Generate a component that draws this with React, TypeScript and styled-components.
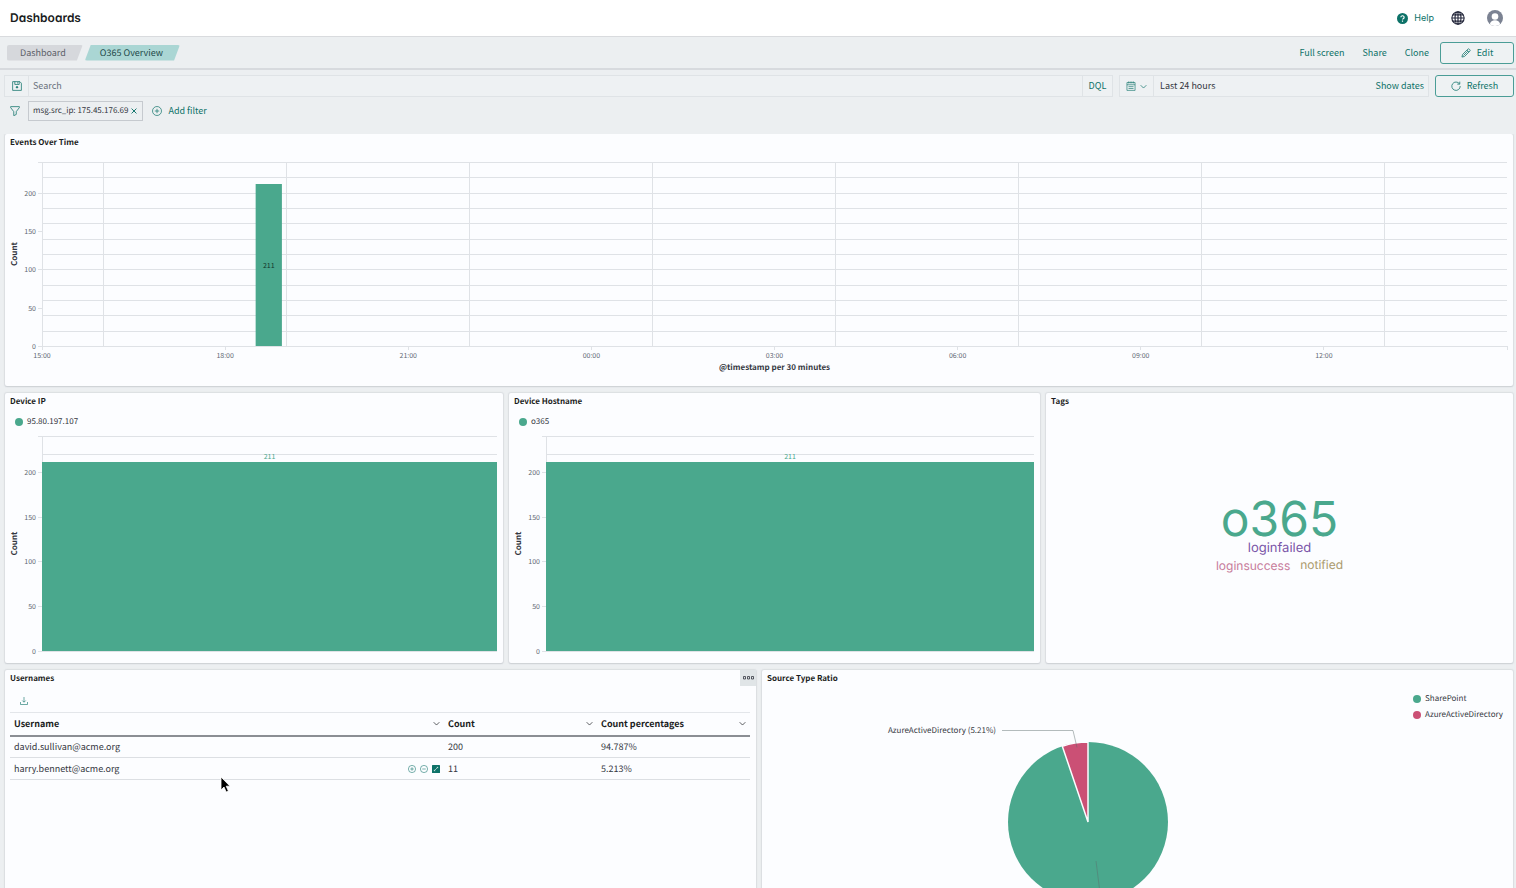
import React from "react";
import styled, { createGlobalStyle } from "styled-components";

const GREEN = "#0d7268";
const BAR = "#4aa88d";
const TEXT = "#343741";
const UI = `"Noto Sans CJK SC", "Open Sans", sans-serif`;

const Global = createGlobalStyle`
  * { box-sizing: border-box; }
  body { margin: 0; background: #eceff1; font-family: ${UI}; font-size: 9px; line-height: 16px; color: ${TEXT}; text-rendering: geometricPrecision; }
  button, input { font: inherit; color: inherit; }
  button { cursor: pointer; padding: 0; border: 0; background: none; }
  svg { display: block; }
`;

const Page = styled.div`
  height: 100vh;
  overflow: hidden;
  display: flex;
  flex-direction: column;
`;

const Header = styled.header`
  flex: none;
  display: flex;
  align-items: center;
  height: 37px;
  padding: 0 13px 0 10px;
  background: #fff;
  border-bottom: 1px solid #d9dbde;
`;

const AppTitle = styled.h1`
  margin: 0;
  flex: 1;
  font: 600 12px/18px Inter, sans-serif;
  font-feature-settings: "cv11";
  color: #1a1c21;
`;

const HelpButton = styled.button`
  display: flex;
  align-items: center;
  gap: 6px;
  color: ${GREEN};
  font-family: Inter, sans-serif;
  margin-right: 17px;
`;

const IconButton = styled.button<{ $gap?: number; $color?: string }>`
  display: flex;
  align-items: center;
  justify-content: center;
  color: ${(p) => p.$color ?? GREEN};
  margin-right: ${(p) => p.$gap ?? 0}px;
`;

const NavBar = styled.nav`
  flex: none;
  display: flex;
  align-items: center;
  height: 33px;
  padding: 0 2px 0 7px;
  border-bottom: 2px solid #d7dade;
`;

const Crumbs = styled.div`
  display: flex;
  flex: 1;
  gap: 2px;
`;

const Crumb = styled.a<{ $current?: boolean }>`
  padding: 0 17px 0 ${(p) => (p.$current ? 15 : 13)}px;
  line-height: 16px;
  text-decoration: none;
  color: ${(p) => (p.$current ? "#1f4a4a" : "#5c6069")};
  background: ${(p) => (p.$current ? "#aad6d4" : "#d6d8dc")};
  border-radius: 2px;
  clip-path: ${(p) =>
    p.$current
      ? "polygon(6px 0, 100% 0, calc(100% - 6px) 100%, 0 100%)"
      : "polygon(0 0, 100% 0, calc(100% - 6px) 100%, 0 100%)"};
`;

const NavActions = styled.div`
  display: flex;
  align-items: center;
  gap: 18px;
  margin-right: 11px;
`;

const TextButton = styled.button`
  color: ${GREEN};
  white-space: nowrap;
`;

const OutlineButton = styled.button<{ $width: number }>`
  display: flex;
  align-items: center;
  justify-content: center;
  gap: 6px;
  width: ${(p) => p.$width}px;
  height: 22px;
  border: 1px solid #4a9d96;
  border-radius: 3px;
  color: ${GREEN};
  background: #eef2f3;
`;

const QueryRow = styled.form`
  flex: none;
  display: flex;
  gap: 6px;
  margin: 5px 2px 0 4px;
`;

const Field = styled.div<{ $width?: number }>`
  display: flex;
  align-items: stretch;
  flex: ${(p) => (p.$width ? `0 0 ${p.$width}px` : "1")};
  height: 22px;
  border: 1px solid #dfe3e6;
  background: #eef1f3;
`;

const FieldAddon = styled.button<{ $width: number; $side: "left" | "right" }>`
  display: flex;
  align-items: center;
  justify-content: center;
  gap: 4px;
  width: ${(p) => p.$width}px;
  color: ${GREEN};
  border-${(p) => (p.$side === "left" ? "right" : "left")}: 1px solid #dfe3e6;
`;

const SearchInput = styled.input`
  flex: 1;
  min-width: 0;
  border: 0;
  outline: 0;
  padding: 0 4px 1px;
  background: transparent;
  &::placeholder { color: #6a717d; opacity: 1; }
`;

const RangeButton = styled.button`
  flex: 1;
  padding: 0 0 1px 6px;
  text-align: left;
`;

const DatesButton = styled(TextButton)`
  margin-right: 4px;
`;

const FilterRow = styled.div`
  flex: none;
  display: flex;
  align-items: center;
  height: 20px;
  margin: 4px 10px 13px;
`;

const FilterPill = styled.span`
  display: flex;
  align-items: center;
  gap: 3px;
  height: 20px;
  padding: 0 5px 0 4px;
  margin: 0 9px 0 8px;
  border: 1px solid #c6cacf;
  font-size: 8px;
`;

const AddFilter = styled(TextButton)`
  display: flex;
  align-items: center;
  gap: 6px;
`;

const Main = styled.main`
  flex: 1;
  min-height: 0;
  overflow-y: auto;
  scrollbar-width: none;
  padding: 0 3px 6px 5px;
  display: flex;
  flex-direction: column;
  gap: 7px;
`;

const PanelRow = styled.div`
  flex: none;
  display: flex;
  gap: 6px;
`;

const Panel = styled.section<{ $grow: number; $height: number }>`
  flex: ${(p) => p.$grow} 1 0;
  min-width: 0;
  height: ${(p) => p.$height}px;
  position: relative;
  display: flex;
  flex-direction: column;
  background: #fcfdff;
  border-radius: 2px;
  box-shadow: 0 0 1px 1px #d3d7dbaa, 0 1px 1px #c8ccd0;
`;

const PanelTitle = styled.h2`
  margin: 0;
  padding: 0 5px;
  font-size: 8px;
  line-height: 18px;
  color: #1a1c21;
`;

const Legend = styled.ul<{ $vertical?: boolean }>`
  list-style: none;
  margin: 0;
  padding: ${(p) => (p.$vertical ? "3px 10px 0 0" : "3px 10px 6px")};
  display: flex;
  flex-direction: column;
  align-self: ${(p) => (p.$vertical ? "flex-end" : "flex-start")};
  font-size: 8px;
`;

const LegendItem = styled.li<{ $color: string }>`
  display: flex;
  align-items: center;
  gap: 4px;
  &::before {
    content: "";
    width: 8px;
    height: 8px;
    border-radius: 50%;
    background: ${(p) => p.$color};
  }
`;

const Plot = styled.div<{ $top: number; $height: number }>`
  height: ${(p) => p.$height}px;
  margin: ${(p) => p.$top}px 6px 0 37px;
  svg { overflow: visible; }
`;

const Tick = styled.text`
  font-size: 7px;
  fill: #646a75;
`;

const AxisTitle = styled.text`
  font-size: 8px;
  font-weight: 700;
  fill: ${TEXT};
  text-anchor: middle;
`;

type ChartProps = {
  top: number;
  height: number;
  bar: { from: number; to: number; value: number };
  labelInside?: boolean;
  hours?: string[];
  xTitle?: string;
};

const MAX = 240;

function BarChart({ top, height, bar, labelInside, hours, xTitle }: ChartProps) {
  const y = (v: number) => Math.round(height - (v / MAX) * height);
  const pct = (hour: number) => `${(hour / 24) * 100}%`;
  const steps = Array.from({ length: 13 }, (_, i) => i * 20);
  const mid = `${(bar.from + bar.to) * 50}%`;
  return (
    <Plot $top={top} $height={height}>
      <svg width="100%" height={height} role="img" aria-label="Count">
        <g stroke="#dfe2e6" shapeRendering="crispEdges">
          {steps.map((v) => (
            <line key={v} x1="0" x2="100%" y1={y(v)} y2={y(v)} />
          ))}
          {[0, 50, 100, 150, 200, 240].map((v) => (
            <line key={v} x1="-4" x2="0" y1={y(v)} y2={y(v)} />
          ))}
          <line x1="0" x2="0" y1="0" y2={height} />
          {hours &&
            [1, 4, 7, 10, 13, 16, 19, 22].map((h) => (
              <line key={h} x1={pct(h)} x2={pct(h)} y1="0" y2={height} />
            ))}
          {hours &&
            [0, 3, 6, 9, 12, 15, 18, 21, 24].map((h) => (
              <line key={h} x1={pct(h)} x2={pct(h)} y1={height} y2={height + 4} />
            ))}
        </g>
        <rect
          x={`${bar.from * 100}%`}
          width={`${(bar.to - bar.from) * 100}%`}
          y={y(bar.value)}
          height={height - y(bar.value)}
          fill={BAR}
        />
        <Tick
          x={mid}
          y={labelInside ? height / 2 + 14 : y(bar.value) - 3}
          textAnchor="middle"
          style={{ fill: labelInside ? "#12352b" : BAR }}
        >
          {bar.value}
        </Tick>
        {[0, 50, 100, 150, 200].map((v) => (
          <Tick key={v} x="-6" y={y(v) + 3} textAnchor="end">
            {v}
          </Tick>
        ))}
        {hours?.map((label, i) => (
          <Tick key={label} x={pct(i * 3)} y={height + 12} textAnchor="middle">
            {label}
          </Tick>
        ))}
        <AxisTitle transform={`translate(-25 ${height / 2}) rotate(-90)`}>Count</AxisTitle>
        {xTitle && (
          <AxisTitle x="50%" y={height + 24}>
            {xTitle}
          </AxisTitle>
        )}
      </svg>
    </Plot>
  );
}

const Cloud = styled.div`
  flex: 1;
  display: flex;
  flex-direction: column;
  align-items: center;
  padding-top: 87px;
  font-family: Inter, sans-serif;
`;

const Tag = styled.span<{ $size: number; $line: number; $color: string }>`
  font-size: ${(p) => p.$size}px;
  line-height: ${(p) => p.$line}px;
  color: ${(p) => p.$color};
`;

const TagLine = styled.div`
  display: flex;
  gap: 10px;
`;

const MenuButton = styled.button`
  position: absolute;
  top: 0;
  right: 0;
  width: 16px;
  height: 16px;
  display: flex;
  align-items: center;
  justify-content: center;
  background: #e0e5e7;
  color: ${TEXT};
`;

const Download = styled(IconButton)`
  align-self: flex-start;
  margin: 9px 0 7px 15px;
`;

const Table = styled.table`
  margin: 0 5px;
  width: calc(100% - 11px);
  border-collapse: collapse;
  table-layout: fixed;
  border-top: 1px solid #e3e6ea;
`;

const HeadCell = styled.th<{ $width?: string }>`
  width: ${(p) => p.$width ?? "auto"};
  height: 23px;
  padding: 0 4px;
  text-align: left;
  color: #1a1c21;
  border-bottom: 2px solid #8b8e94;
`;

const Cell = styled.td`
  height: 22px;
  padding: 0 4px;
  border-bottom: 1px solid #dcdfe3;
`;

const CellLine = styled.div`
  display: flex;
  align-items: center;
  justify-content: space-between;
`;

const CellActions = styled.div`
  display: flex;
  gap: 4px;
`;

const PieArea = styled.div`
  display: flex;
  justify-content: center;
  position: absolute;
  top: 49px;
  left: 0;
  width: 652px;
  svg { overflow: visible; }
`;

const PieLabel = styled.text`
  font-size: 8px;
  fill: ${TEXT};
`;

const Pointer = styled.svg`
  position: absolute;
  left: 215px;
  top: 106px;
`;

type IconProps = { size?: number };

const svgProps = (size: number) => ({
  width: size,
  height: size,
  viewBox: "0 0 16 16",
  fill: "none",
  stroke: "currentColor",
  "aria-hidden": true,
});

const HelpIcon = ({ size = 11 }: IconProps) => (
  <svg {...svgProps(size)}>
    <circle cx="8" cy="8" r="8" fill="currentColor" stroke="none" />
    <path d="M5.6 6.2a2.4 2.2 0 1 1 3.4 2c-.7.4-1 .7-1 1.400M8 11v1.600" stroke="#fff" strokeWidth="1.700" />
  </svg>
);

const GlobeIcon = ({ size = 14 }: IconProps) => (
  <svg {...svgProps(size)} strokeWidth="1.300">
    <circle cx="8" cy="8" r="7" />
    <ellipse cx="8" cy="8" rx="3.400" ry="7" />
    <path d="M8 1v14M1 8h14M2 4.500h12M2 11.500h12" />
  </svg>
);

const UserIcon = ({ size = 16 }: IconProps) => (
  <svg {...svgProps(size)} stroke="none">
    <circle cx="8" cy="8" r="8" fill="currentColor" />
    <circle cx="8" cy="6.500" r="3.300" fill="#fff" />
    <path d="M2.800 14.200c.6-2.700 2.500-4 5.200-4s4.600 1.300 5.200 4A8 8 0 0 1 8 16a8 8 0 0 1-5.200-1.800z" fill="#fff" />
  </svg>
);

const PencilIcon = ({ size = 10 }: IconProps) => (
  <svg {...svgProps(size)} strokeWidth="1.200">
    <path d="M1.500 14.500l1-4.200L11 1.800a1.500 1.500 0 0 1 2.100 0l1.100 1.100a1.500 1.500 0 0 1 0 2.100L5.700 13.500zM9.500 3.300l3.200 3.200M4 12l7-7" />
  </svg>
);

const SaveIcon = ({ size = 10 }: IconProps) => (
  <svg {...svgProps(size)} strokeWidth="1.200">
    <path d="M1 1h11.500L15 3.500V15H1zM4.500 1v4.500h7V1M9 2v2" />
    <circle cx="8" cy="10" r="1.300" fill="currentColor" />
  </svg>
);

const FilterIcon = ({ size = 10 }: IconProps) => (
  <svg {...svgProps(size)} strokeWidth="1.200">
    <path d="M1 1h14v1.500L10 9v4.500L6 15.500V9L1 2.500z" />
  </svg>
);

const CalendarIcon = ({ size = 10 }: IconProps) => (
  <svg {...svgProps(size)} strokeWidth="1">
    <path d="M1.500 2.500h13v12.500h-13zM1.500 6h13M4.500 0.500v3.500M8 0.500v3.500M11.500 0.500v3.500M4 9h8M4 12h8" />
  </svg>
);

const ChevronIcon = ({ size = 7 }: IconProps) => (
  <svg {...svgProps(size)} strokeWidth="1.600">
    <path d="M1.500 5L8 11.500 14.500 5" />
  </svg>
);

const RefreshIcon = ({ size = 10 }: IconProps) => (
  <svg {...svgProps(size)} strokeWidth="1.200">
    <path d="M13.500 4.500A6.700 6.700 0 1 0 14.700 8M14 1v4h-4" />
  </svg>
);

const CrossIcon = ({ size = 6 }: IconProps) => (
  <svg {...svgProps(size)} strokeWidth="2.500">
    <path d="M1.500 1.500l13 13M14.500 1.500l-13 13" />
  </svg>
);

const PlusCircleIcon = ({ size = 10 }: IconProps) => (
  <svg {...svgProps(size)} strokeWidth="1.100">
    <circle cx="8" cy="8" r="7.200" />
    <path d="M8 4.500v7M4.500 8h7" />
  </svg>
);

const MinusCircleIcon = ({ size = 10 }: IconProps) => (
  <svg {...svgProps(size)} strokeWidth="1.100">
    <circle cx="8" cy="8" r="7.200" />
    <path d="M4.500 8h7" />
  </svg>
);

const ExpandIcon = ({ size = 8 }: IconProps) => (
  <svg {...svgProps(size)}>
    <rect width="16" height="16" rx="1" fill="currentColor" stroke="none" />
    <path d="M4.500 11.500l7-7M9.500 4.500h2v2M4.500 9.500v2h2" stroke="#fff" strokeWidth="1.200" />
  </svg>
);

const DownloadIcon = ({ size = 8 }: IconProps) => (
  <svg {...svgProps(size)} strokeWidth="1.200">
    <path d="M8 0v10M4.500 7L8 10.500 11.500 7M1 10v5h14v-5" />
  </svg>
);

const BoxesIcon = () => (
  <svg width="11" height="4" viewBox="0 0 11 4" fill="none" stroke="currentColor" strokeOpacity=".8" aria-hidden>
    <path d="M.5.5h2v2.500h-2zM4.500.5h2v2.500h-2zM8.500.5h2v2.500h-2z" />
  </svg>
);

const HOURS = ["15:00", "18:00", "21:00", "00:00", "03:00", "06:00", "09:00", "12:00"];

const USERS = [
  { name: "david.sullivan@acme.org", count: 200, share: "94.787%" },
  { name: "harry.bennett@acme.org", count: 11, share: "5.213%", active: true },
];

export default function App() {
  return (
    <>
      <Global />
      <Page>
        <Header>
          <AppTitle>Dashboards</AppTitle>
          <HelpButton type="button">
            <HelpIcon />
            Help
          </HelpButton>
          <IconButton type="button" aria-label="Language" $gap={22} $color="#23263a">
            <GlobeIcon />
          </IconButton>
          <IconButton type="button" aria-label="Account" $color="#7b8292">
            <UserIcon />
          </IconButton>
        </Header>

        <NavBar>
          <Crumbs>
            <Crumb href="#dashboard">Dashboard</Crumb>
            <Crumb href="#o365" $current>
              O365 Overview
            </Crumb>
          </Crumbs>
          <NavActions>
            <TextButton type="button">Full screen</TextButton>
            <TextButton type="button">Share</TextButton>
            <TextButton type="button">Clone</TextButton>
          </NavActions>
          <OutlineButton type="button" $width={74}>
            <PencilIcon />
            Edit
          </OutlineButton>
        </NavBar>

        <QueryRow onSubmit={(e) => e.preventDefault()}>
          <Field>
            <FieldAddon type="button" $width={24} $side="left" aria-label="Saved queries">
              <SaveIcon />
            </FieldAddon>
            <SearchInput aria-label="Search" placeholder="Search" />
            <FieldAddon type="button" $width={30} $side="right">
              DQL
            </FieldAddon>
          </Field>
          <Field $width={310}>
            <FieldAddon type="button" $width={34} $side="left" aria-label="Quick ranges">
              <CalendarIcon />
              <ChevronIcon />
            </FieldAddon>
            <RangeButton type="button">Last 24 hours</RangeButton>
            <DatesButton type="button">Show dates</DatesButton>
          </Field>
          <OutlineButton type="submit" $width={79}>
            <RefreshIcon />
            Refresh
          </OutlineButton>
        </QueryRow>

        <FilterRow>
          <IconButton type="button" aria-label="Filters">
            <FilterIcon />
          </IconButton>
          <FilterPill>
            msg.src_ip: 175.45.176.69
            <IconButton type="button" aria-label="Remove filter">
              <CrossIcon />
            </IconButton>
          </FilterPill>
          <AddFilter type="button">
            <PlusCircleIcon />
            Add filter
          </AddFilter>
        </FilterRow>

        <Main>
          <PanelRow>
            <Panel $grow={1} $height={252}>
              <PanelTitle>Events Over Time</PanelTitle>
              <BarChart
                top={10}
                height={184}
                bar={{ from: 3.5 / 24, to: 3.93 / 24, value: 211 }}
                labelInside
                hours={HOURS}
                xTitle="@timestamp per 30 minutes"
              />
            </Panel>
          </PanelRow>

          <PanelRow>
            <Panel $grow={498} $height={270}>
              <PanelTitle>Device IP</PanelTitle>
              <Legend>
                <LegendItem $color={BAR}>95.80.197.107</LegendItem>
              </Legend>
              <BarChart top={0} height={215} bar={{ from: 0, to: 1, value: 211 }} />
            </Panel>
            <Panel $grow={531} $height={270}>
              <PanelTitle>Device Hostname</PanelTitle>
              <Legend>
                <LegendItem $color={BAR}>o365</LegendItem>
              </Legend>
              <BarChart top={0} height={215} bar={{ from: 0, to: 1, value: 211 }} />
            </Panel>
            <Panel $grow={467} $height={270}>
              <PanelTitle>Tags</PanelTitle>
              <Cloud>
                <Tag $size={48} $line={42} $color={BAR}>
                  o365
                </Tag>
                <Tag $size={13} $line={17} $color="#7a55a8">
                  loginfailed
                </Tag>
                <TagLine>
                  <Tag $size={12} $line={18} $color="#c77b9a">
                    loginsuccess
                  </Tag>
                  <Tag $size={12} $line={16} $color="#ab9a6c">
                    notified
                  </Tag>
                </TagLine>
              </Cloud>
            </Panel>
          </PanelRow>

          <PanelRow>
            <Panel $grow={751} $height={270}>
              <PanelTitle>Usernames</PanelTitle>
              <MenuButton type="button" aria-label="Panel options">
                <BoxesIcon />
              </MenuButton>
              <Download type="button" aria-label="Export">
                <DownloadIcon />
              </Download>
              <Table>
                <thead>
                  <tr>
                    {["Username", "Count", "Count percentages"].map((label, i) => (
                      <HeadCell key={label} scope="col" $width={i ? "153px" : undefined}>
                        <CellLine>
                          {label}
                          <ChevronIcon />
                        </CellLine>
                      </HeadCell>
                    ))}
                  </tr>
                </thead>
                <tbody>
                  {USERS.map((u) => (
                    <tr key={u.name}>
                      <Cell>
                        <CellLine>
                          {u.name}
                          {u.active && (
                            <CellActions>
                              <IconButton type="button" aria-label="Filter for value">
                                <PlusCircleIcon size={8} />
                              </IconButton>
                              <IconButton type="button" aria-label="Filter out value">
                                <MinusCircleIcon size={8} />
                              </IconButton>
                              <IconButton type="button" aria-label="Expand">
                                <ExpandIcon />
                              </IconButton>
                            </CellActions>
                          )}
                        </CellLine>
                      </Cell>
                      <Cell>{u.count}</Cell>
                      <Cell>{u.share}</Cell>
                    </tr>
                  ))}
                </tbody>
              </Table>
              <Pointer width="14" height="18" viewBox="0 0 14 18" aria-hidden>
                <path d="M1 1v13l3-3 2.200 5 2.200-1-2.200-4.800H10z" fill="#000" stroke="#fff" strokeWidth=".8" />
              </Pointer>
            </Panel>
            <Panel $grow={751} $height={270}>
              <PanelTitle>Source Type Ratio</PanelTitle>
              <Legend $vertical>
                <LegendItem $color={BAR}>SharePoint</LegendItem>
                <LegendItem $color="#cb5075">AzureActiveDirectory</LegendItem>
              </Legend>
              <PieArea>
                <svg width="400" height="190" viewBox="0 0 400 190" role="img" aria-label="Source types">
                  <circle cx="200" cy="103" r="80" fill={BAR} />
                  <path d="M200 103L174.300 27.200A80 80 0 0 1 200 23z" fill="#cb5075" stroke="#fcfdff" strokeWidth="1.500" />
                  <path d="M114 11.500h71l4 17M208 142l4 32" fill="none" stroke="#5b6b6b" strokeOpacity=".45" />
                  <PieLabel x="108" y="14" textAnchor="end">
                    AzureActiveDirectory (5.21%)
                  </PieLabel>
                </svg>
              </PieArea>
            </Panel>
          </PanelRow>
        </Main>
      </Page>
    </>
  );
}
